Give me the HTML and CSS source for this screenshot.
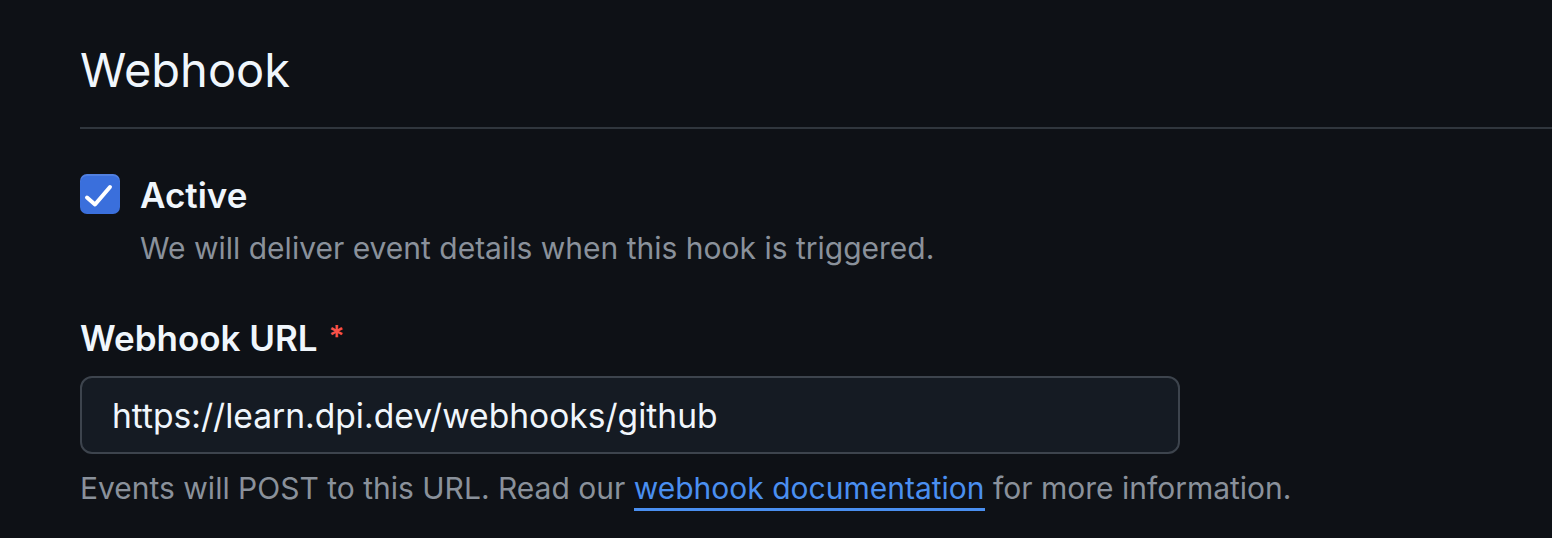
FILE: index.html
```html
<!DOCTYPE html>
<html lang="en">
<head>
<meta charset="utf-8">
<title>Webhook</title>
<link rel="stylesheet" href="styles.css">
</head>
<body>
<main class="page">
  <header class="subhead">
    <h2 class="subhead-heading">Webhook</h2>
  </header>
  <div class="form-checkbox">
    <span class="checkbox" aria-hidden="true">
      <svg viewBox="0 0 40 40" width="40" height="40"><path d="M7 23.5 L15 30.5 L30 13" fill="none" stroke="#ffffff" stroke-width="4" stroke-linecap="round" stroke-linejoin="round"/></svg>
    </span>
    <div class="checkbox-text">
      <label class="checkbox-label">Active</label>
      <p class="note">We will deliver event details when this hook is triggered.</p>
    </div>
  </div>
  <div class="form-group">
    <label class="field-label">Webhook URL <span class="required">*</span></label>
    <div class="input">https://learn.dpi.dev/webhooks/github</div>
    <p class="help">Events will POST to this URL. Read our <a class="link" href="#">webhook documentation</a> for more information.</p>
  </div>
</main>
</body>
</html>
```
FILE: styles.css
```css
html, body {
  margin: 0;
  padding: 0;
  background: #0e1116;
  color: #f0f6fc;
  font-family: Inter, "Noto Sans", "Liberation Sans", sans-serif;
}
.page {
  padding-left: 80px;
}
.subhead {
  border-bottom: 2px solid #30363d;
  padding-top: 38px;
  padding-bottom: 25px;
}
.subhead-heading {
  margin: 0;
  font-size: 47px;
  font-weight: 400;
  line-height: 64px;
  color: #f0f6fc;
}
.form-checkbox {
  display: flex;
  gap: 20px;
  margin-top: 45px;
}
.checkbox {
  width: 40px;
  height: 40px;
  border-radius: 7px;
  background: #3a6fdc;
  box-shadow: inset 0 2px 0 rgba(255, 255, 255, 0.12);
  flex: none;
  display: block;
}
.checkbox svg { display: block; }
.checkbox-text { display: flex; flex-direction: column; }
.checkbox-label {
  font-size: 35px;
  font-weight: 600;
  line-height: 42px;
  color: #f0f6fc;
}
.note {
  margin: 12px 0 0;
  font-size: 30px;
  line-height: 40px;
  color: #8a919b;
}
.form-group {
  margin-top: 47px;
}
.field-label {
  display: block;
  font-size: 35px;
  font-weight: 600;
  line-height: 42px;
  color: #f0f6fc;
}
.required {
  color: #f85149;
  font-size: 30px;
  margin-left: 2px;
  vertical-align: 4px;
}
.input {
  margin-top: 17px;
  border: 2px solid #3d444d;
  border-radius: 12px;
  background: #151b23;
  padding: 0 30px;
  box-sizing: border-box;
  width: 1100px;
  height: 78px;
  display: flex;
  align-items: center;
  font-size: 33.6px;
  color: #f0f6fc;
}
.help {
  margin: 14px 0 0;
  font-size: 30px;
  line-height: 40px;
  color: #8a919b;
}
.link {
  display: inline-block;
  line-height: 40px;
  padding-bottom: 3px;
  color: #4a8ff0;
  text-decoration: none;
  box-shadow: inset 0 -3px 0 #4a8ff0;
}
```
